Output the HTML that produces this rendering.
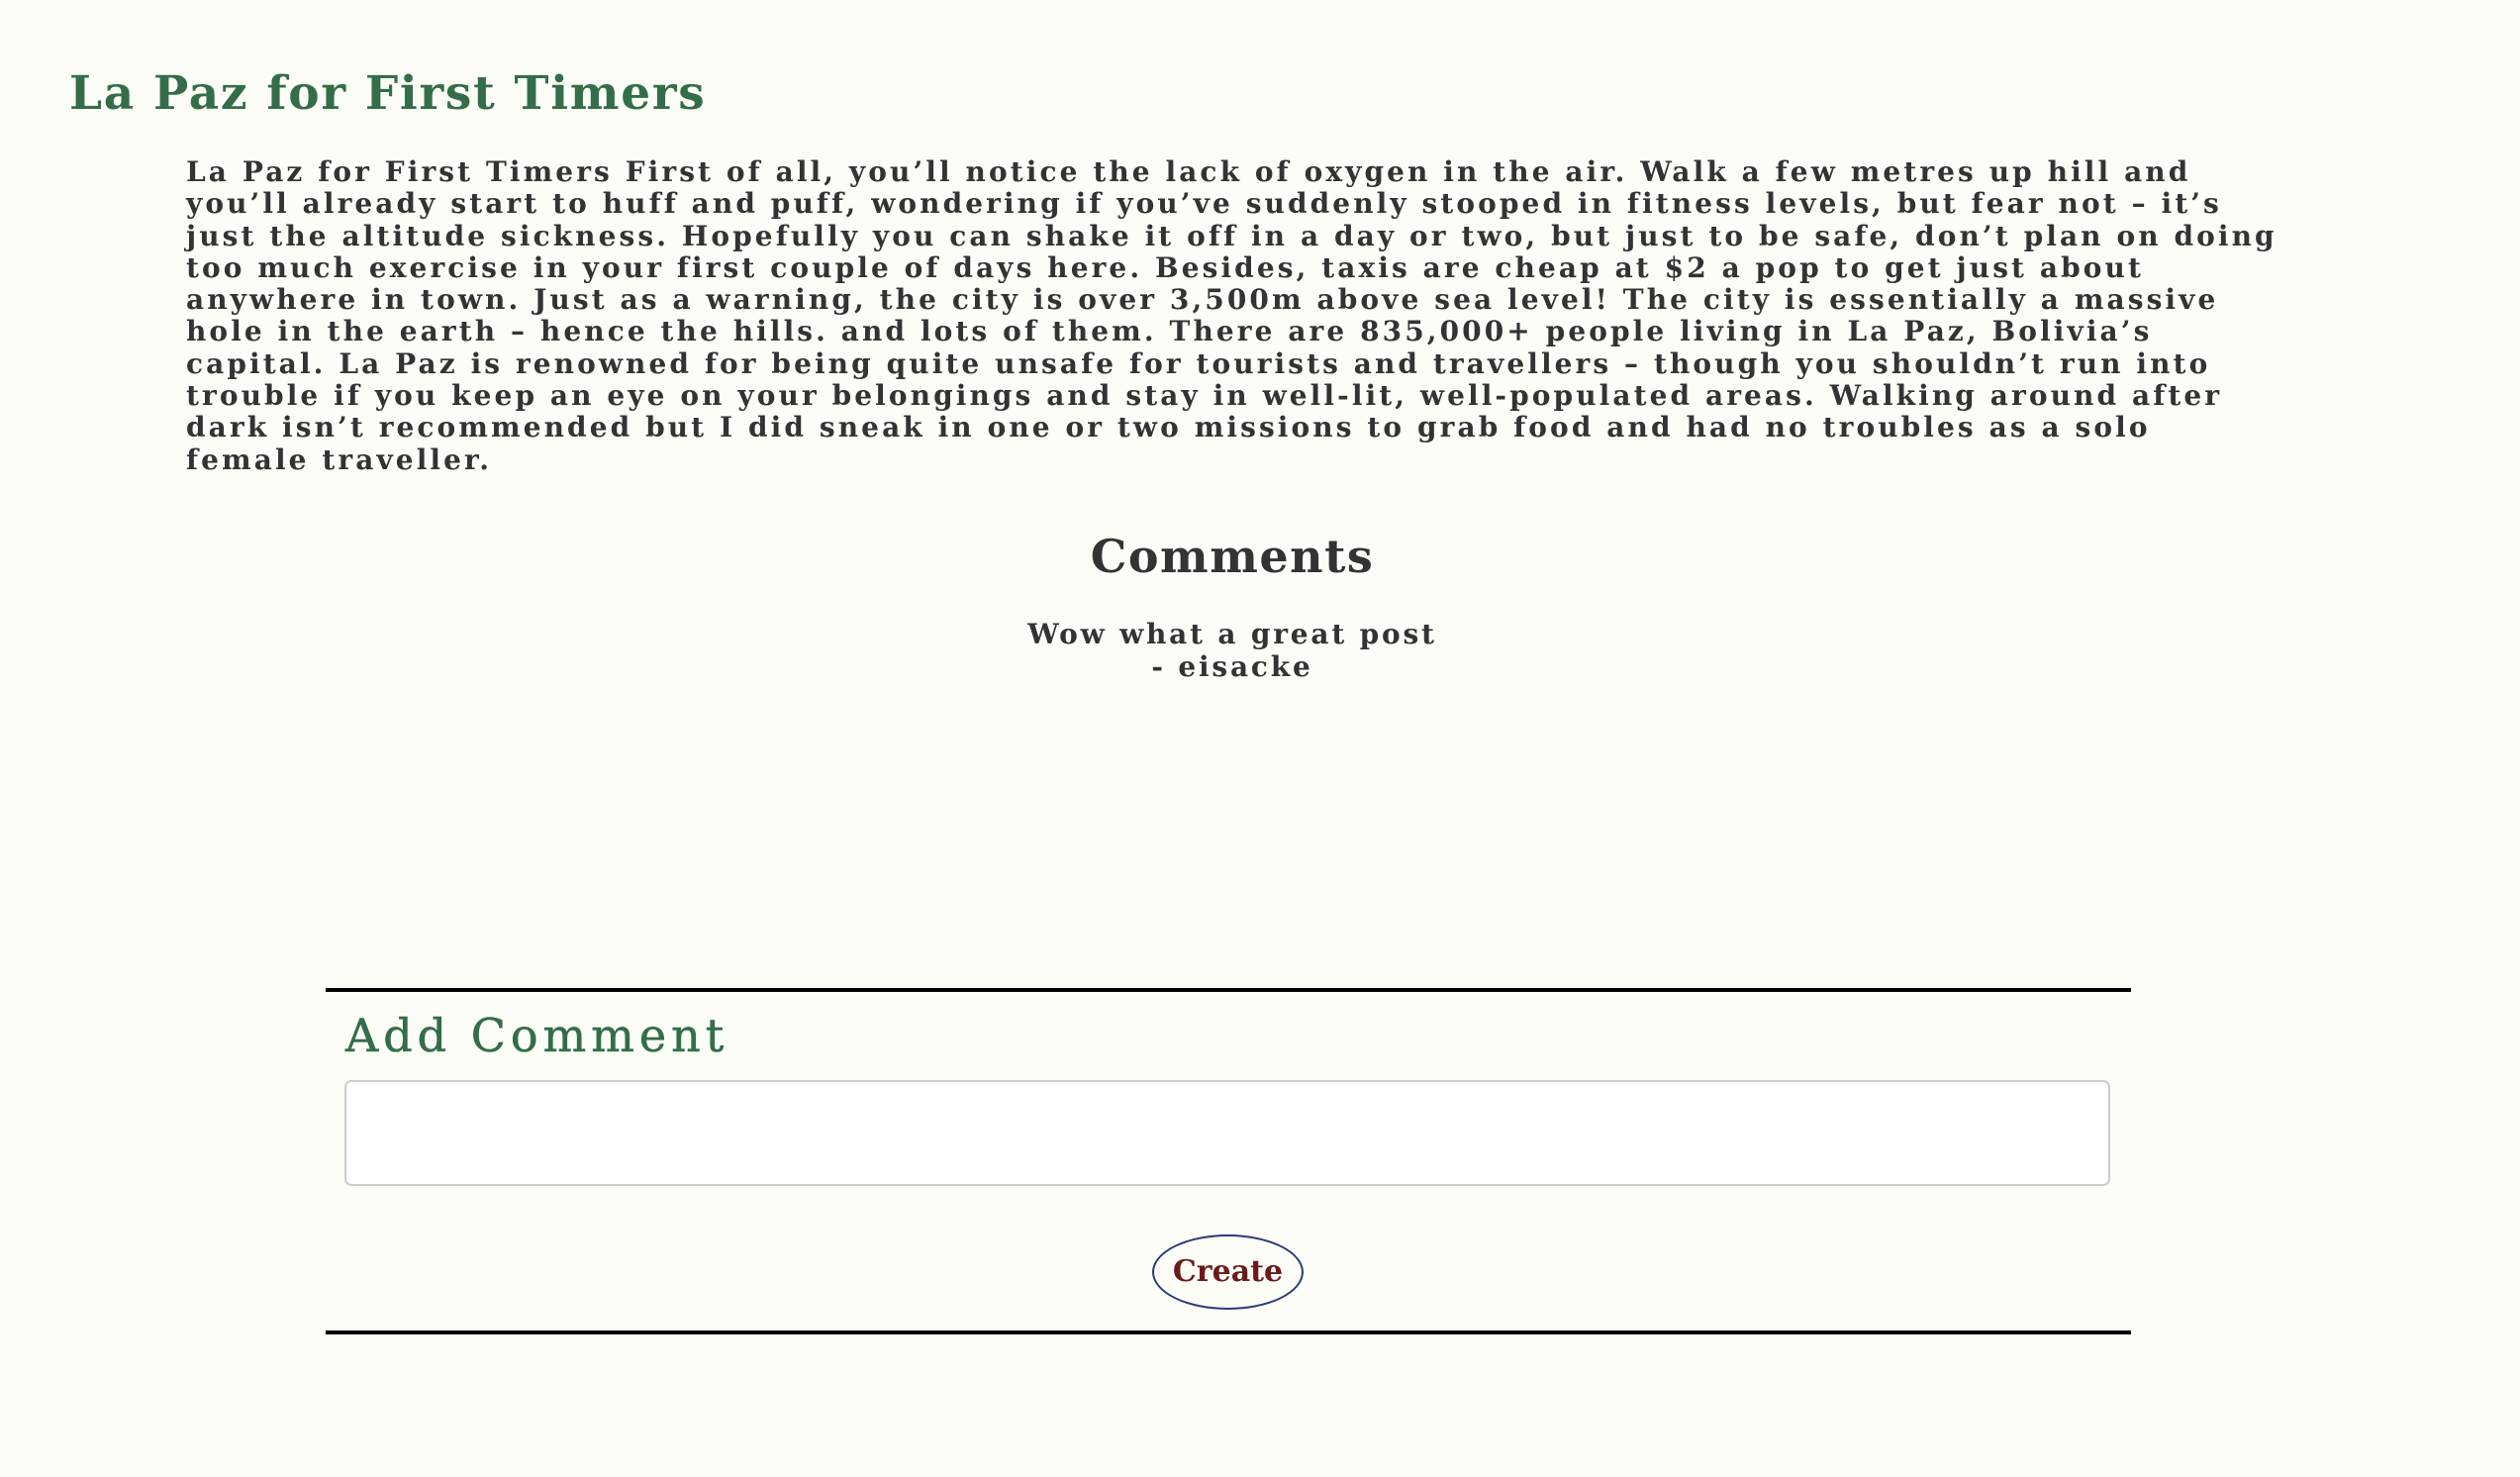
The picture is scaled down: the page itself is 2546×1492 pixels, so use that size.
<!DOCTYPE html>
<html><head><meta charset="utf-8">
<style>
html,body{margin:0;padding:0;background:#fdfdf7;width:2546px;height:1492px;overflow:hidden;}
body{font-family:"DejaVu Serif","Liberation Serif",serif;color:#333;position:relative;}
.title{position:absolute;left:70px;top:67px;font-size:47px;font-weight:bold;color:#336e48;letter-spacing:1.7px;white-space:nowrap;}
.body{position:absolute;left:188px;top:158px;font-size:28px;font-weight:bold;line-height:32.3px;letter-spacing:3.08px;white-space:nowrap;}
.comments{position:absolute;left:0;width:2490px;text-align:center;top:535px;font-size:46px;font-weight:bold;letter-spacing:1.5px;}
.c{position:absolute;left:0;width:2490px;text-align:center;top:624px;font-size:28px;font-weight:bold;line-height:33px;letter-spacing:2.8px;}
.hr{position:absolute;left:329px;width:1824px;height:4px;background:#000;}
.add{position:absolute;left:349px;top:1019px;font-size:46px;color:#336e48;letter-spacing:5px;white-space:nowrap;-webkit-text-stroke:0.6px #336e48;}
.ta{position:absolute;left:348px;top:1091px;width:1780px;height:103px;border:2px solid #ccc;border-radius:7px;background:#fff;}
.btn{position:absolute;left:1164px;top:1247px;width:149px;height:72px;border:2px solid #2a3a7a;border-radius:50%;text-align:center;line-height:72px;font-size:30px;color:#6b1a1a;font-weight:bold;}
</style></head><body>
<div class="title">La Paz for First Timers</div>
<div class="body">La Paz for First Timers First of all, you’ll notice the lack of oxygen in the air. Walk a few metres up hill and<br>you’ll already start to huff and puff, wondering if you’ve suddenly stooped in fitness levels, but fear not – it’s<br>just the altitude sickness. Hopefully you can shake it off in a day or two, but just to be safe, don’t plan on doing<br>too much exercise in your first couple of days here. Besides, taxis are cheap at $2 a pop to get just about<br>anywhere in town. Just as a warning, the city is over 3,500m above sea level! The city is essentially a massive<br>hole in the earth – hence the hills. and lots of them. There are 835,000+ people living in La Paz, Bolivia’s<br>capital. La Paz is renowned for being quite unsafe for tourists and travellers – though you shouldn’t run into<br>trouble if you keep an eye on your belongings and stay in well-lit, well-populated areas. Walking around after<br>dark isn’t recommended but I did sneak in one or two missions to grab food and had no troubles as a solo<br>female traveller.</div>
<div class="comments">Comments</div>
<div class="c">Wow what a great post<br>- eisacke</div>
<div class="hr" style="top:998px"></div>
<div class="add">Add Comment</div>
<div class="ta"></div>
<div class="btn">Create</div>
<div class="hr" style="top:1344px"></div>
</body></html>
